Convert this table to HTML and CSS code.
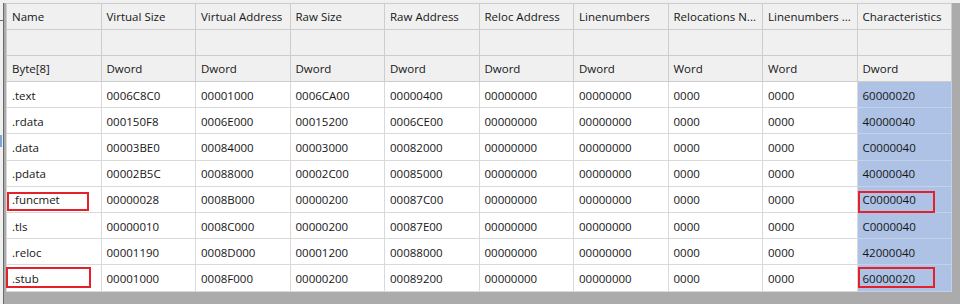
FILE: index.html
```html
<!DOCTYPE html>
<html>
<head>
<meta charset="utf-8">
<link rel="stylesheet" href="styles.css">
</head>
<body>
<div class="panel">
  <table class="grid">
    <colgroup>
      <col><col><col><col><col><col><col><col><col><col class="sel">
    </colgroup>
    <thead>
      <tr class="hrow">
        <th>Name</th><th>Virtual Size</th><th>Virtual Address</th><th>Raw Size</th><th>Raw Address</th><th>Reloc Address</th><th>Linenumbers</th><th>Relocations N...</th><th>Linenumbers ...</th><th>Characteristics</th>
      </tr>
      <tr class="hrow">
        <th></th><th></th><th></th><th></th><th></th><th></th><th></th><th></th><th></th><th></th>
      </tr>
      <tr class="hrow">
        <th>Byte[8]</th><th>Dword</th><th>Dword</th><th>Dword</th><th>Dword</th><th>Dword</th><th>Dword</th><th>Word</th><th>Word</th><th>Dword</th>
      </tr>
    </thead>
    <tbody>
      <tr><td>.text</td><td>0006C8C0</td><td>00001000</td><td>0006CA00</td><td>00000400</td><td>00000000</td><td>00000000</td><td>0000</td><td>0000</td><td class="ch">60000020</td></tr>
      <tr><td>.rdata</td><td>000150F8</td><td>0006E000</td><td>00015200</td><td>0006CE00</td><td>00000000</td><td>00000000</td><td>0000</td><td>0000</td><td class="ch">40000040</td></tr>
      <tr><td>.data</td><td>00003BE0</td><td>00084000</td><td>00003000</td><td>00082000</td><td>00000000</td><td>00000000</td><td>0000</td><td>0000</td><td class="ch">C0000040</td></tr>
      <tr><td>.pdata</td><td>00002B5C</td><td>00088000</td><td>00002C00</td><td>00085000</td><td>00000000</td><td>00000000</td><td>0000</td><td>0000</td><td class="ch">40000040</td></tr>
      <tr><td>.funcmet</td><td>00000028</td><td>0008B000</td><td>00000200</td><td>00087C00</td><td>00000000</td><td>00000000</td><td>0000</td><td>0000</td><td class="ch">C0000040</td></tr>
      <tr><td>.tls</td><td>00000010</td><td>0008C000</td><td>00000200</td><td>00087E00</td><td>00000000</td><td>00000000</td><td>0000</td><td>0000</td><td class="ch">C0000040</td></tr>
      <tr><td>.reloc</td><td>00001190</td><td>0008D000</td><td>00001200</td><td>00088000</td><td>00000000</td><td>00000000</td><td>0000</td><td>0000</td><td class="ch">42000040</td></tr>
      <tr><td>.stub</td><td>00001000</td><td>0008F000</td><td>00000200</td><td>00089200</td><td>00000000</td><td>00000000</td><td>0000</td><td>0000</td><td class="ch">60000020</td></tr>
    </tbody>
  </table>
  <div class="hl hl-funcmet"></div>
  <div class="hl hl-stub"></div>
  <div class="hl hl-ch1"></div>
  <div class="hl hl-ch2"></div>
</div>
<div class="edge-line"></div>
<div class="edge-sel"></div>
</body>
</html>
```
FILE: styles.css
```css
html, body {
  margin: 0;
  padding: 0;
}
body {
  background: #f0f0f0;
  width: 960px;
  height: 304px;
  overflow: hidden;
  position: relative;
  font-family: "Open Sans", "Noto Sans", sans-serif;
  font-size: 11.5px;
  color: #161616;
}
.panel {
  position: relative;
  margin: 3px 0 0 3px;
  height: 301px;
  border-left: 1px solid #6a6a6a;
  padding-left: 2px;
  background: #ababab;
  box-sizing: border-box;
}
.grid {
  border-collapse: collapse;
  table-layout: fixed;
  width: 946px;
}
.grid th, .grid td {
  text-align: left;
  font-weight: normal;
  padding: 0 0 0 5px;
  white-space: nowrap;
  overflow: hidden;
  border: 1px solid #d9d9d9;
}
.grid th {
  background: #f0f0f0;
  height: 25px;
  border-color: #cdcdcd;
}
.grid td {
  background: #ffffff;
  height: 26.2px;
  padding-top: 1px;
  box-sizing: border-box;
}
.grid td.ch {
  background: #adc2e5;
  border-color: #c3d1ea;
}
.hl {
  position: absolute;
  border: 2px solid #e4202b;
  box-sizing: border-box;
}
.hl-funcmet { left: 3px; top: 189px; width: 82px; height: 19px; }
.hl-stub { left: 2px; top: 264px; width: 85px; height: 21px; }
.hl-ch1 { left: 854px; top: 188px; width: 77px; height: 22px; }
.hl-ch2 { left: 854px; top: 264px; width: 77px; height: 21px; }
.edge-line {
  position: absolute;
  left: 0;
  top: 20px;
  width: 4px;
  height: 1px;
  background: #6a6a6a;
}
.edge-sel {
  position: absolute;
  left: 0;
  top: 135px;
  width: 2px;
  height: 12px;
  background: #7aa7da;
}
```
